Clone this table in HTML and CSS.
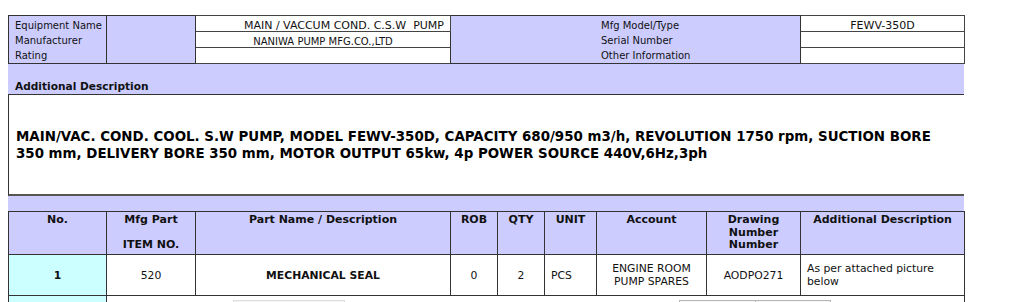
FILE: index.html
```html
<!DOCTYPE html>
<html lang="en">
<head>
<meta charset="utf-8">
<title>Equipment Spare Parts Requisition</title>
<link rel="stylesheet" href="styles.css">
</head>
<body>
<div class="sheet">
  <table class="info">
    <colgroup>
      <col class="c-label"><col class="c-blank"><col class="c-value"><col class="c-label2"><col class="c-value2">
    </colgroup>
    <tr>
      <td class="lab" rowspan="3">Equipment Name<br>Manufacturer<br>Rating</td>
      <td class="lab" rowspan="3"></td>
      <td class="val val-right val-lg">MAIN / VACCUM COND. C.S.W&nbsp; PUMP</td>
      <td class="lab lab-right" rowspan="3">Mfg Model/Type<br>Serial Number<br>Other Information</td>
      <td class="val val-lg">FEWV-350D</td>
    </tr>
    <tr>
      <td class="val">NANIWA PUMP MFG.CO.,LTD</td>
      <td class="val"></td>
    </tr>
    <tr>
      <td class="val"></td>
      <td class="val"></td>
    </tr>
  </table>

  <div class="band"><span class="band-title">Additional Description</span></div>
  <div class="desc">
    <p>MAIN/VAC. COND. COOL. S.W PUMP, MODEL FEWV-350D, CAPACITY 680/950 m3/h, REVOLUTION 1750 rpm, SUCTION BORE 350 mm, DELIVERY BORE 350 mm, MOTOR OUTPUT 65kw, 4p POWER SOURCE 440V,6Hz,3ph</p>
  </div>
  <div class="band band-thin"></div>

  <table class="parts">
    <colgroup>
      <col class="p-no"><col class="p-mfg"><col class="p-name"><col class="p-rob"><col class="p-qty"><col class="p-unit"><col class="p-acc"><col class="p-drw"><col class="p-add">
    </colgroup>
    <tr class="head">
      <th>No.</th>
      <th>Mfg Part<br><br>ITEM NO.</th>
      <th>Part Name / Description</th>
      <th>ROB</th>
      <th>QTY</th>
      <th>UNIT</th>
      <th>Account</th>
      <th>Drawing<br>Number<br>Number</th>
      <th>Additional Description</th>
    </tr>
    <tr class="item">
      <td class="no">1</td>
      <td>520</td>
      <td class="strong">MECHANICAL SEAL</td>
      <td>0</td>
      <td>2</td>
      <td class="left">PCS</td>
      <td>ENGINE ROOM<br>PUMP SPARES</td>
      <td>AODPO271</td>
      <td class="left note">As per attached picture below</td>
    </tr>
    <tr class="pics">
      <td class="no"></td>
      <td class="pic-cell" colspan="8">
        <div class="pic-row">
          <div class="frame frame-a"></div>
          <div class="frame frame-b"><div class="frame-split"></div></div>
        </div>
      </td>
    </tr>
  </table>
</div>
</body>
</html>
```

FILE: styles.css
```css
html, body {
  margin: 0;
  background: #ffffff;
}

body {
  padding: 15px 0 0 8px;
  font-family: "DejaVu Sans", Verdana, sans-serif;
  font-size: 10px;
  color: #111111;
}

.sheet {
  width: 956px;
}

table {
  border-collapse: collapse;
  table-layout: fixed;
  width: 956px;
}

td, th {
  padding: 0;
  font-weight: normal;
}

/* ---------- equipment header ---------- */
.info {
  border: 1px solid #333333;
}

.c-label { width: 98px; }
.c-blank { width: 89px; }
.c-value { width: 255px; }
.c-label2 { width: 350px; }
.c-value2 { width: 164px; }

.info td {
  height: 15px;
  border: 1px solid #333333;
  vertical-align: bottom;
}

.info .lab {
  background: #ccccff;
  padding: 0 0 0 6px;
  line-height: 15px;
}

.info .lab-right {
  padding-left: 150px;
}

.info .val {
  background: #ffffff;
  text-align: center;
  border-color: #444444;
  white-space: nowrap;
  line-height: 10px;
}

.info .val-lg {
  font-size: 11px;
}

.info .val-right {
  text-align: right;
  padding-right: 6px;
}

/* ---------- description ---------- */
.band {
  background: #ccccff;
  height: 30px;
  display: flex;
  align-items: flex-end;
}

.band-title {
  font-weight: bold;
  font-size: 10.6px;
  padding: 0 0 1px 7px;
  line-height: 13px;
}

.band-thin {
  height: 15px;
}

.desc {
  height: 99px;
  border-top: 1px solid #333333;
  border-left: 1px solid #333333;
  border-bottom: 2px solid #555555;
  display: flex;
  align-items: center;
  padding: 0 6px 0 7px;
  background: #ffffff;
}

.desc p {
  margin: 0;
  font-size: 13.4px;
  font-weight: bold;
  line-height: 17px;
  color: #000000;
}

/* ---------- parts list ---------- */
.parts {
  border: 1px solid #333333;
}

.p-no { width: 98px; }
.p-mfg { width: 89px; }
.p-name { width: 255px; }
.p-rob { width: 47px; }
.p-qty { width: 47px; }
.p-unit { width: 52px; }
.p-acc { width: 110px; }
.p-drw { width: 94px; }
.p-add { width: 164px; }

.parts th,
.parts td {
  border: 1px solid #333333;
}

.head th {
  background: #ccccff;
  font-weight: bold;
  font-size: 11px;
  text-align: center;
  vertical-align: top;
  line-height: 12.5px;
  height: 40px;
  padding-top: 2px;
}

.item td {
  height: 40px;
  font-size: 10.8px;
  text-align: center;
  vertical-align: middle;
  line-height: 13px;
  background: #ffffff;
}

.item td.left {
  text-align: left;
  padding-left: 6px;
}

.item td.note {
  padding-right: 12px;
}

.item td.strong {
  font-weight: bold;
}

.parts td.no {
  background: #ccffff;
  font-weight: bold;
}

.pics td {
  height: 60px;
  vertical-align: top;
}

.pic-cell {
  border-color: #999999;
}

.pic-row {
  display: flex;
  padding-top: 4px;
}

.frame {
  height: 60px;
  border: 1px solid #b8b8b8;
  background: #f4f4f4;
}

.frame-a {
  width: 110px;
  margin-left: 126px;
  border-color: #dddddd;
}

.frame-b {
  width: 150px;
  margin-left: 334px;
  display: flex;
}

.frame-split {
  width: 75px;
  border-right: 1px solid #b8b8b8;
}
```
